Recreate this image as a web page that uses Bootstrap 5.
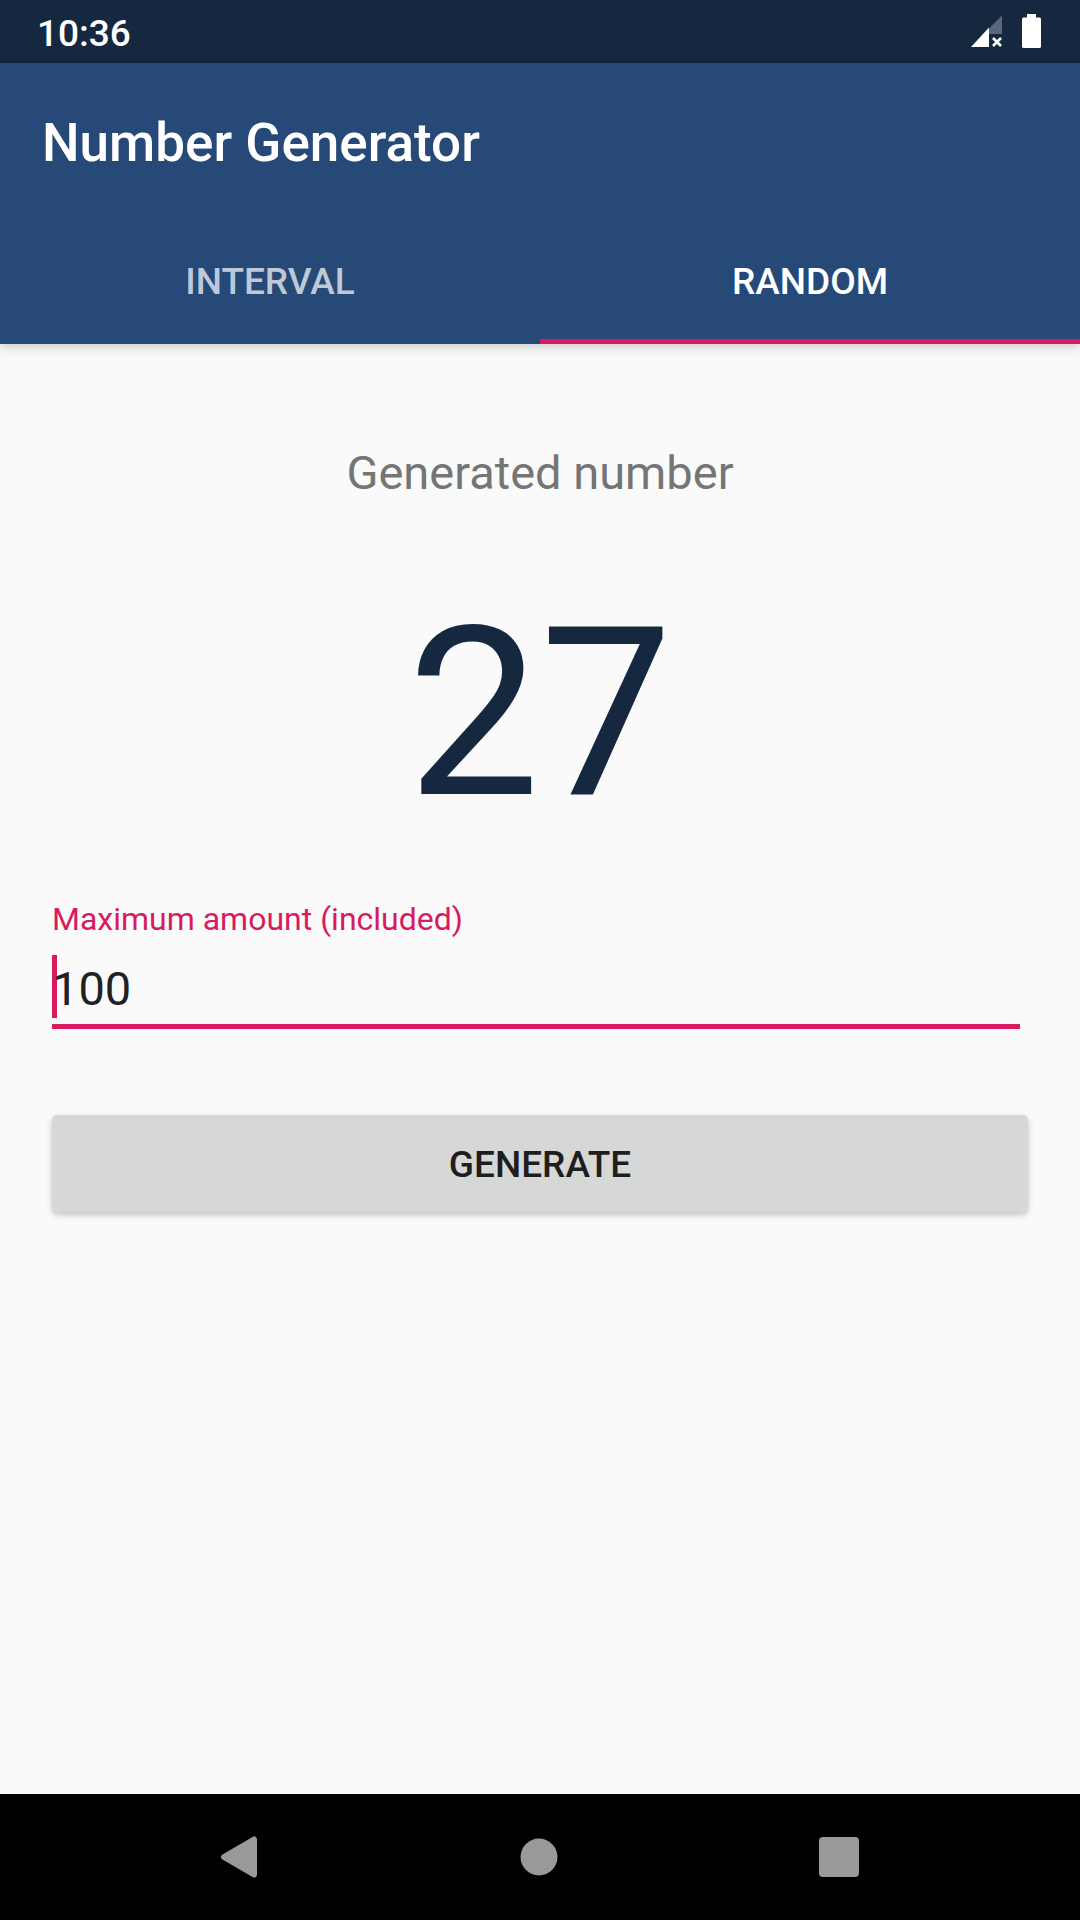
<!DOCTYPE html>
<html lang="en">
<head>
<meta charset="utf-8">
<meta name="viewport" content="width=device-width, initial-scale=1">
<title>Number Generator</title>
<link rel="stylesheet" href="https://cdn.jsdelivr.net/npm/bootstrap@5.3.0/dist/css/bootstrap.min.css">
<style>
  body { font-family: Roboto, "Noto Sans", sans-serif; background: #fafafa; color: #212121; }
  .status-bar { background: #162740; height: 63px; padding: 4px 39px 0 37px; font-size: 37px; font-weight: 500; line-height: 59px; }
  .status-icons { gap: 20px; height: 54px; }
  .app-header { background: #264978; box-shadow: 0 2px 12px rgba(0, 0, 0, .22); }
  .app-title { font-size: 53px; font-weight: 500; line-height: 62px; padding: 49px 42px 44px; }
  .app-tabs .nav-link { background: none; border: 0; border-radius: 0; border-bottom: 5px solid transparent; padding: 7px 0 0; font-size: 37px; font-weight: 500; line-height: 114px; color: #bec8d6; }
  .app-tabs .nav-link.active { color: #fff; border-bottom-color: #d81b60; }
  .app-main { padding: 101px 52px 0; }
  .result-label { font-size: 47px; line-height: 56px; color: #757575; }
  .result-value { font-size: 236px; line-height: 276px; margin: 75px 0 48px; color: #162740; }
  .field-label { font-size: 32px; line-height: 38px; color: #d81b60; margin-bottom: 16px; }
  .field-row { padding-right: 8px; margin-bottom: 86px; }
  /* The gradient is the text cursor, drawn behind the digits */
  .field-input, .field-input:focus {
    height: 75px; padding: 0 0 2px; border: 0; border-bottom: 5px solid #d81b60; border-radius: 0; box-shadow: none;
    font-size: 47px; line-height: 68px; color: #212121;
    background: linear-gradient(#d81b60, #d81b60) 0 1px / 5px 63px no-repeat;
  }
  .generate-btn, .generate-btn:hover { background: #d6d8d7; color: #1e1e1e; border: 0; border-radius: 5px; padding: 20px 0 17px; font-size: 37px; font-weight: 500; line-height: 60px; box-shadow: 0 3px 6px rgba(0, 0, 0, .22); }
  .system-nav { background: #000; height: 126px; gap: 200px; padding-right: 3px; }
  .system-nav .btn { width: 100px; height: 100px; }
</style>
<script src="https://cdn.jsdelivr.net/npm/bootstrap@5.3.0/dist/js/bootstrap.bundle.min.js"></script>
</head>
<body class="d-flex flex-column min-vh-100">
  <div class="status-bar d-flex justify-content-between text-white">
    <time>10:36</time>
    <div class="status-icons d-flex align-items-center">
      <svg width="31" height="34" viewBox="0 0 31 34" aria-label="No mobile signal" role="img">
        <path d="M18 14.500L31 1.500V20H18z" fill="#5c6879"/>
        <path d="M0 33L18 13.500V33z" fill="#fff"/>
        <path d="M22 24l8 8M30 24l-8 8" stroke="#fff" stroke-width="2.600"/>
      </svg>
      <svg width="19" height="34" viewBox="0 0 19 34" aria-label="Battery full" role="img">
        <path d="M5 0h9v3.500h3.500q1.500 0 1.500 1.500v27.500q0 1.500-1.500 1.500h-16Q0 34 0 32.500V5q0-1.500 1.500-1.500H5z" fill="#fff"/>
      </svg>
    </div>
  </div>

  <header class="app-header">
    <h1 class="app-title text-white m-0">Number Generator</h1>
    <div class="app-tabs nav nav-justified" role="tablist">
      <button class="nav-link nav-item" type="button" role="tab" aria-selected="false">INTERVAL</button>
      <button class="nav-link nav-item active" type="button" role="tab" aria-selected="true">RANDOM</button>
    </div>
  </header>

  <main class="app-main flex-grow-1">
    <p class="result-label text-center m-0">Generated number</p>
    <p class="result-value text-center">27</p>
    <form>
      <label class="field-label d-block" for="max">Maximum amount (included)</label>
      <div class="field-row">
        <input class="field-input form-control" id="max" type="text" inputmode="numeric" value="100">
      </div>
      <button class="generate-btn btn w-100" type="button">GENERATE</button>
    </form>
  </main>

  <nav class="system-nav d-flex justify-content-center align-items-center" aria-label="System">
    <button class="btn p-0 border-0" type="button" aria-label="Back">
      <svg width="40" height="44" viewBox="0 0 40 44"><path d="M35 4.500v35L5 22z" fill="#999" stroke="#999" stroke-width="6" stroke-linejoin="round"/></svg>
    </button>
    <button class="btn p-0 border-0" type="button" aria-label="Home">
      <svg width="40" height="40" viewBox="0 0 40 40"><circle cx="20" cy="20" r="18.500" fill="#999"/></svg>
    </button>
    <button class="btn p-0 border-0" type="button" aria-label="Recent apps">
      <svg width="40" height="40" viewBox="0 0 40 40"><rect width="40" height="40" rx="4" fill="#999"/></svg>
    </button>
  </nav>
</body>
</html>
